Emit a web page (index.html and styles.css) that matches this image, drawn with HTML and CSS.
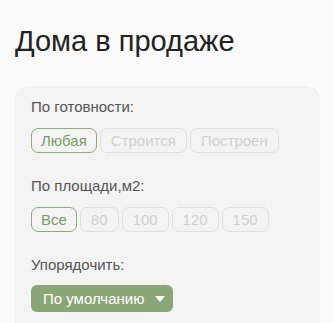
FILE: index.html
```html
<!DOCTYPE html>
<html lang="ru">
<head>
  <meta charset="UTF-8" />
  <meta name="viewport" content="width=device-width, initial-scale=1.0"/>
  <title>Дома в продаже</title>
  <link rel="stylesheet" href="styles.css">
</head>
<body>
  <h1 class="title">Дома в продаже</h1>
  <div class="filters">
    <div class="group">
      <div class="label">По готовности:</div>
      <div class="chips">
        <button class="chip active">Любая</button>
        <button class="chip">Строится</button>
        <button class="chip">Построен</button>
      </div>
    </div>
    <div class="group">
      <div class="label">По площади,м2:</div>
      <div class="chips">
        <button class="chip active">Все</button>
        <button class="chip">80</button>
        <button class="chip">100</button>
        <button class="chip">120</button>
        <button class="chip">150</button>
      </div>
    </div>
    <div class="group">
      <div class="label">Упорядочить:</div>
      <button class="sort">По умолчанию <span class="caret"></span></button>
    </div>
  </div>
</body>
</html>
```

FILE: styles.css
```css
* { margin: 0; padding: 0; box-sizing: border-box; }
body {
  font-family: 'Liberation Sans', Arial, sans-serif;
  background: #fafafa;
  color: #222;
}
.title {
  font-size: 29px;
  font-weight: normal;
  color: #222;
  padding: 24px 15px 0;
  line-height: 34px;
}
.filters {
  margin: 28px 13px 0 15px;
  background: #f3f3f3;
  border-radius: 14px;
  padding: 12px 16px 0;
  height: 250px;
}
.group { margin-bottom: 24px; }
.label {
  font-size: 15px;
  line-height: 18px;
  color: #555;
  margin-bottom: 12px;
}
.chips { display: flex; gap: 3px; }
.chip {
  font-family: inherit;
  font-size: 15px;
  height: 25px;
  padding: 0 10px;
  background: transparent;
  border: 1.5px solid #e0e0e0;
  border-radius: 7px;
  color: #d0d0d0;
}
.chip.active {
  padding: 0 9px;
  border-color: #8ea97c;
  color: #7d9a6a;
}
.sort {
  font-family: inherit;
  font-size: 15px;
  height: 27px;
  padding: 0 8px 0 12px;
  background: #8ba676;
  color: #fff;
  border: none;
  border-radius: 6px;
  display: flex;
  align-items: center;
  gap: 11px;
  margin-top: -1px;
}
.caret {
  width: 0; height: 0;
  border-left: 5px solid transparent;
  border-right: 5px solid transparent;
  border-top: 6px solid #fff;
}
```
